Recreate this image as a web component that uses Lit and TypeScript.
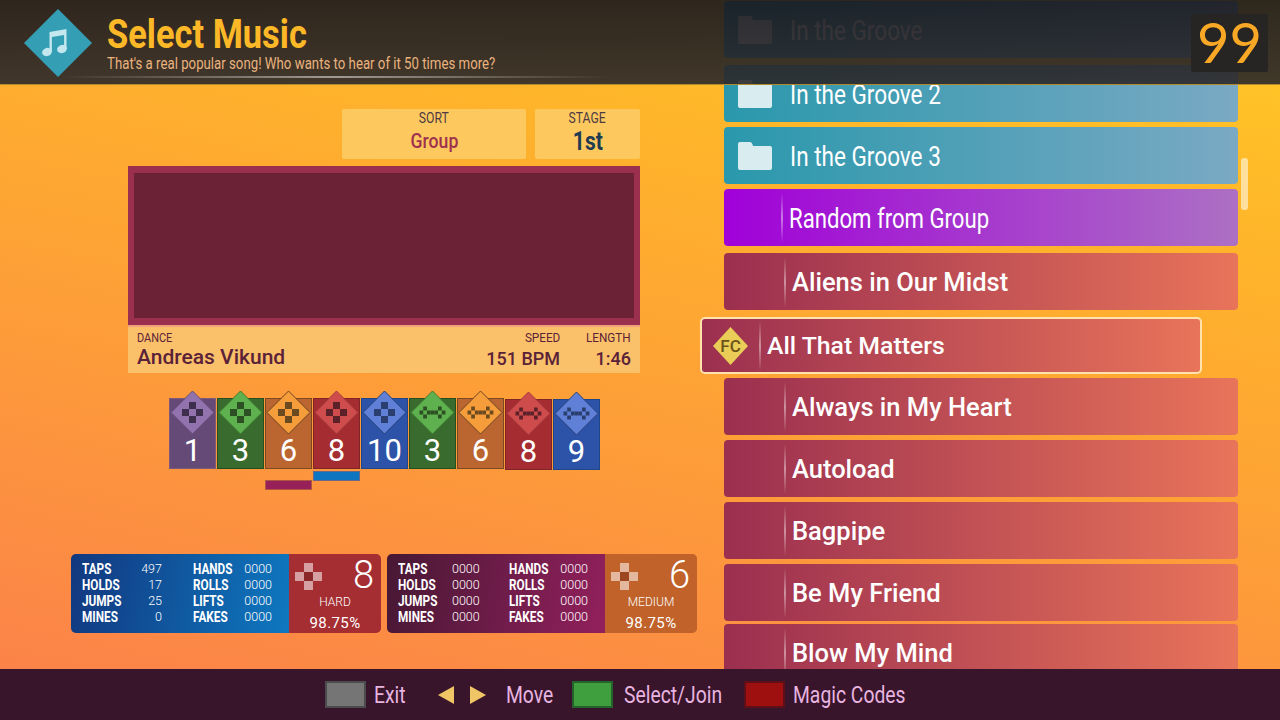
import { LitElement, html, css, svg } from 'lit';
import { customElement } from 'lit/decorators.js';

type Tile = { n: number; c: string; dbl?: boolean; low?: boolean; mark?: string };

const TILES: Tile[] = [
  { n: 1, c: 'beginner' },
  { n: 3, c: 'easy' },
  { n: 6, c: 'medium', mark: 'p2' },
  { n: 8, c: 'hard', mark: 'p1' },
  { n: 10, c: 'expert' },
  { n: 3, c: 'easy', dbl: true },
  { n: 6, c: 'medium', dbl: true },
  { n: 8, c: 'hard', dbl: true, low: true },
  { n: 9, c: 'expert', dbl: true, low: true },
];

type Row = { title: string; kind: 'folder' | 'random' | 'song' | 'selected'; mt: number };

const ROWS: Row[] = [
  { title: 'In the Groove', kind: 'folder', mt: 1 },
  { title: 'In the Groove 2', kind: 'folder', mt: 7 },
  { title: 'In the Groove 3', kind: 'folder', mt: 5 },
  { title: 'Random from Group', kind: 'random', mt: 5 },
  { title: 'Aliens in Our Midst', kind: 'song', mt: 7 },
  { title: 'All That Matters', kind: 'selected', mt: 7 },
  { title: 'Always in My Heart', kind: 'song', mt: 4 },
  { title: 'Autoload', kind: 'song', mt: 5 },
  { title: 'Bagpipe', kind: 'song', mt: 5 },
  { title: 'Be My Friend', kind: 'song', mt: 5 },
  { title: 'Blow My Mind', kind: 'song', mt: 3 },
];

const singlePad = svg`
  <rect x="7" y="0" width="7" height="7" /><rect x="0" y="7" width="7" height="7" />
  <rect x="14" y="7" width="7" height="7" /><rect x="7" y="14" width="7" height="7" />`;

const doubleCells = [[1, 0], [5, 0], [0, 1], [2, 1], [3, 1], [4, 1], [6, 1], [1, 2], [5, 2]];

@customElement('app-root')
export class AppRoot extends LitElement {
  static styles = css`
    :host {
      display: block;
      width: 1280px;
      height: 720px;
      overflow: hidden;
      font-family: Roboto, sans-serif;
    }
    .page {
      position: relative;
      width: 1280px;
      height: 720px;
      display: flex;
      flex-direction: column;
      overflow: hidden;
      background: linear-gradient(192deg, #ffca25 0%, #ffb52a 25%, #fb7f4b 100%);
    }
    .cond {
      display: inline-block;
      transform: scaleX(0.84);
      transform-origin: left center;
      white-space: nowrap;
    }
    .cond.mid { transform-origin: center center; }
    .cond.end { transform-origin: right center; transform: scaleX(0.9); }

    /* header lies over the top of the wheel */
    .header {
      position: absolute;
      top: 0;
      left: 0;
      right: 0;
      height: 84px;
      border-bottom: 1px solid #b08a2c;
      background: linear-gradient(rgba(24, 22, 28, 0.9), rgba(44, 41, 42, 0.9));
      display: flex;
      z-index: 2;
    }
    .logo { width: 68px; height: 68px; margin: 9px 0 0 24px; }
    .titles { margin-left: 15px; }
    .title {
      font-size: 41px;
      font-weight: 700;
      color: #fdb827;
      line-height: 44px;
      margin-top: 12px;
    }
    .sub {
      font-size: 15.75px;
      color: #eab27e;
      line-height: 18px;
      margin-top: -1px;
    }
    .rule {
      position: absolute;
      left: 60px;
      top: 76px;
      width: 550px;
      height: 2px;
      background: linear-gradient(90deg, transparent, rgba(255, 255, 255, 0.5) 50%, transparent);
    }
    .timer {
      position: absolute;
      right: 12px;
      top: 14px;
      width: 77px;
      height: 58px;
      background: #262523;
      border-radius: 2px;
      color: #f9a825;
      font-family: Lato, sans-serif;
      font-weight: 400;
      font-size: 56px;
      line-height: 56px;
      text-align: center;
    }

    .main { flex: 1; display: flex; min-height: 0; overflow: hidden; }

    /* left column */
    .left { width: 724px; flex: none; padding-top: 109px; }
    .boxes { display: flex; justify-content: flex-end; gap: 9px; margin-left: 128px; width: 512px; }
    .box {
      height: 50px;
      border-radius: 2px;
      background: #fdc95e;
      text-align: center;
      color: #4f3a44;
      font-size: 14.5px;
    }
    .box.sort { width: 184px; }
    .box.stage { width: 105px; }
    .box .lbl { line-height: 14px; margin-top: 3px; }
    .box .val { line-height: 26px; font-size: 21px; color: #a0304f; font-weight: 500; margin-top: 2px; }
    .box.stage .val { color: #1f3b52; font-size: 25px; font-weight: 700; margin-top: 3px; }
    .banner {
      box-sizing: border-box;
      margin: 7px 0 0 128px;
      width: 512px;
      height: 159px;
      border: solid #9b2f4e;
      border-width: 7px 6px;
      background: #6b2236;
    }
    .info {
      box-sizing: border-box;
      margin-left: 128px;
      width: 512px;
      height: 48px;
      border-top: 2px solid #f1a27a;
      background: #fbc06a;
      color: #5a2238;
      display: flex;
      padding: 3px 9px 0 9px;
    }
    .info .lbl { font-size: 13px; line-height: 15px; }
    .info .artist { flex: 1; }
    .info .name { font-size: 21px; font-weight: 500; line-height: 25px; }
    .info .col { text-align: right; margin-left: 21px; }
    .info .col.len { width: 50px; }
    .info .v { font-size: 18px; font-weight: 500; line-height: 28px; }

    .tiles { display: flex; gap: 1px; margin: 17px 0 0 169px; height: 100px; }
    .tile-col { width: 47px; }
    .tile-col.low { padding-top: 1px; }
    .tile {
      position: relative;
      box-sizing: border-box;
      margin-top: 8px;
      height: 71px;
      border: 1px solid var(--edge);
      background: var(--body);
      color: #fff;
      font-size: 31px;
      line-height: 34px;
      text-align: center;
      padding-top: 35px;
    }
    .tile svg.dia { position: absolute; left: -1px; top: -10px; width: 47px; height: 47px; overflow: visible; }
    .beginner { --body: #654a78; --edge: #7e5a78; --top: #9273ae; --line: #654a78; --pad: #3f2f4e; }
    .easy { --body: #396b2e; --edge: #254f1f; --top: #5fb04e; --line: #3b7a2e; --pad: #2c5024; }
    .medium { --body: #bb6530; --edge: #7c4a20; --top: #f59c3b; --line: #6c4420; --pad: #6c4a20; }
    .hard { --body: #a52c30; --edge: #7e2626; --top: #cf4c4d; --line: #a0383a; --pad: #5c2028; }
    .expert { --body: #2c53a8; --edge: #20468a; --top: #5f80d6; --line: #24407a; --pad: #2a3f70; }
    .mark { height: 8px; margin: 3px 1px 0; }
    .mark.p1 { background: #0e75c0; outline: 1px solid rgba(44, 83, 168, 0.7); }
    .mark.p2 { background: #972058; margin-top: 12px; outline: 1px solid rgba(120, 50, 70, 0.6); }

    .stats { display: flex; gap: 6px; margin: 64px 0 0 71px; }
    .panel {
      width: 310px;
      height: 79px;
      border-radius: 5px;
      display: flex;
      overflow: hidden;
      color: #fff;
      box-shadow: 0 0 0 1px rgba(80, 50, 60, 0.25) inset;
    }
    .panel.p1 .grid { background: linear-gradient(100deg, #12387f, #0e78c0); }
    .panel.p2 .grid { background: linear-gradient(100deg, #471834, #92205c); }
    .grid {
      width: 218px;
      box-sizing: border-box;
      padding: 7px 0 0 11px;
      display: grid;
      grid-template-columns: 54px 26px 81px 29px;
      grid-auto-rows: 16px;
      font-size: 12px;
      line-height: 16px;
    }
    .grid b { font-weight: 700; font-size: 14px; }
    .grid b.second { padding-left: 31px; }
    .grid span.num { text-align: right; font-weight: 300; font-size: 12.5px; }
    .meter { width: 92px; position: relative; text-align: center; }
    .meter.hard { background: #a52e33; }
    .meter.medium { background: #c0622a; }
    .meter svg { position: absolute; left: 6px; top: 9px; width: 27px; height: 27px; }
    .meter .big {
      position: absolute;
      right: 7px;
      top: 0;
      font-size: 38px;
      font-weight: 300;
      line-height: 42px;
    }
    .meter .diff { padding-top: 41px; font-size: 12px; line-height: 15px; font-weight: 300; }
    .meter .pct { font-size: 15px; line-height: 22px; margin-top: 2px; letter-spacing: 0.4px; }

    /* wheel */
    .wheel { width: 514px; flex: none; }
    .row {
      box-sizing: border-box;
      height: 57px;
      border-radius: 4px;
      display: flex;
      align-items: center;
      color: #fff;
      font-size: 27px;
      white-space: nowrap;
    }
    .row.folder { background: linear-gradient(90deg, #2a98ac, #7aa9c3); }
    .row.random { background: linear-gradient(90deg, #a000d8, #ac70c4); }
    .row.song, .row.selected { background: linear-gradient(90deg, #9b2f4f, #e8745a); font-weight: 500; font-size: 25.5px; }
    .row.selected {
      width: 502px;
      margin-left: -24px;
      border: 2px solid #ffe2ac;
      border-radius: 5px;
      font-size: 24.8px;
    }
    .folder-icon { width: 34px; height: 28px; margin: 0 18px 0 14px; flex: none; }
    .row.folder .cond { transform: scaleX(0.835); margin-top: 2px; }
    .row.random .cond { transform: scaleX(0.82); margin: 3px 0 0 -1px; }
    .sep {
      width: 2px;
      height: 50px;
      flex: none;
      background: linear-gradient(transparent, rgba(255, 255, 255, 0.45) 50%, transparent);
    }
    .row.song .sep { margin: 0 6px 0 60px; }
    .row.random .sep { margin: 0 7px 0 57px; }
    .row.selected .sep { margin: 0 6px 0 11px; }
    .fc { width: 35px; height: 40px; margin-left: 11px; flex: none; }
    .scroll {
      position: absolute;
      left: 1241px;
      top: 158px;
      width: 7px;
      height: 52px;
      border-radius: 3px;
      background: rgba(255, 255, 255, 0.55);
    }

    /* footer */
    .footer {
      height: 51px;
      flex: none;
      position: relative;
      z-index: 1;
      background: #38152a;
      display: flex;
      align-items: center;
      padding-left: 325px;
      color: #e8b4e0;
      font-size: 23px;
    }
    .key { box-sizing: border-box; width: 41px; height: 27px; border: 2px solid; flex: none; }
    .key.grey { background: #757575; border-color: #4c4c4c; }
    .key.green { background: #3f9f3e; border-color: #23642a; margin-left: 8px; }
    .key.red { background: #9e0f10; border-color: #5e0f18; margin-left: 10px; }
    .label { margin-left: 8px; display: inline-block; padding-top: 2px; }
    .arrows { width: 48px; height: 18px; margin-left: 32px; flex: none; }
    .lab-exit { width: 32px; }
    .lab-move { width: 58px; margin-left: 20px; }
    .lab-select { width: 110px; margin-left: 11px; }
    .lab-magic { width: 120px; }
  `;

  private renderTile(t: Tile) {
    const pad = t.dbl
      ? svg`<g transform="translate(10.5 17.5) scale(3.7 4)">
          ${doubleCells.map(([x, y]) => svg`<rect x=${x} y=${y} width="1" height="1" />`)}
        </g>`
      : svg`<g transform="translate(13 13)">${singlePad}</g>`;
    return html`
      <div class="tile-col ${t.low ? 'low' : ''}">
        <div class="tile ${t.c}">
          <svg class="dia" viewBox="0 0 47 47">
            <polygon points="23.5,2 45,23.5 23.5,45 2,23.5" fill="var(--top)" stroke="var(--line)" />
            <g fill="var(--pad)">${pad}</g>
          </svg>
          ${t.n}
        </div>
        ${t.mark ? html`<div class="mark ${t.mark}"></div>` : ''}
      </div>
    `;
  }

  private renderPanel(player: string, diff: string, level: number, name: string, nums: string[]) {
    const labels = ['TAPS', 'HANDS', 'HOLDS', 'ROLLS', 'JUMPS', 'LIFTS', 'MINES', 'FAKES'];
    return html`
      <div class="panel ${player}">
        <div class="grid">
          ${labels.map(
            (l, i) => html`
              <b class=${i % 2 ? 'second' : ''}><span class="cond">${l}</span></b>
              <span class="num">${nums[i]}</span>
            `
          )}
        </div>
        <div class="meter ${diff}">
          <svg viewBox="0 0 27 27" fill="rgba(255,255,255,0.55)">
            <rect x="9" y="0" width="9" height="9" /><rect x="0" y="9" width="9" height="9" />
            <rect x="18" y="9" width="9" height="9" /><rect x="9" y="18" width="9" height="9" />
            <rect x="9" y="9" width="9" height="9" fill="rgba(90,20,20,0.35)" />
          </svg>
          <div class="big">${level}</div>
          <div class="diff">${name}</div>
          <div class="pct">98.75%</div>
        </div>
      </div>
    `;
  }

  private renderRow(r: Row) {
    return html`
      <div class="row ${r.kind}" style="margin-top:${r.mt}px">
        ${r.kind === 'folder'
          ? html`<svg class="folder-icon" viewBox="0 0 34 28">
              <path
                d="M2 0h10q2 0 3 4h17q2 0 2 2v20q0 2-2 2H2q-2 0-2-2V2q0-2 2-2z"
                fill="rgba(255,255,255,0.82)"
              />
            </svg>`
          : ''}
        ${r.kind === 'selected'
          ? html`<svg class="fc" viewBox="0 0 35 40">
                <polygon points="17.5,1 35,20 17.5,39 0,20" fill="#e9cd57" />
                <text x="17.5" y="26" text-anchor="middle" font-size="17" fill="#6b5418" font-family="Roboto">FC</text>
              </svg>`
          : ''}
        ${r.kind !== 'folder' ? html`<div class="sep"></div>` : ''}
        ${r.kind === 'folder' || r.kind === 'random' ? html`<span class="cond">${r.title}</span>` : r.title}
      </div>
    `;
  }

  render() {
    return html`
      <div class="page">
        <div class="main">
          <div class="left">
            <div class="boxes">
              <div class="box sort">
                <div class="lbl"><span class="cond mid">SORT</span></div>
                <div class="val"><span class="cond mid">Group</span></div>
              </div>
              <div class="box stage">
                <div class="lbl"><span class="cond mid">STAGE</span></div>
                <div class="val"><span class="cond mid">1st</span></div>
              </div>
            </div>
            <div class="banner"></div>
            <div class="info">
              <div class="artist">
                <div class="lbl"><span class="cond">DANCE</span></div>
                <div class="name">Andreas Vikund</div>
              </div>
              <div class="col">
                <div class="lbl"><span class="cond end">SPEED</span></div>
                <div class="v">151 BPM</div>
              </div>
              <div class="col len">
                <div class="lbl"><span class="cond end">LENGTH</span></div>
                <div class="v">1:46</div>
              </div>
            </div>
            <div class="tiles">${TILES.map((t) => this.renderTile(t))}</div>
            <div class="stats">
              ${this.renderPanel('p1', 'hard', 8, 'HARD', ['497', '0000', '17', '0000', '25', '0000', '0', '0000'])}
              ${this.renderPanel('p2', 'medium', 6, 'MEDIUM', Array(8).fill('0000'))}
            </div>
          </div>
          <div class="wheel">${ROWS.map((r) => this.renderRow(r))}</div>
        </div>

        <div class="scroll"></div>

        <div class="header">
          <svg class="logo" viewBox="0 0 68 68">
            <polygon points="34,0 68,34 34,68 0,34" fill="#349fb4" />
            <g fill="#c3e6ef">
              <ellipse cx="23" cy="43" rx="5" ry="4" transform="rotate(-20 23 43)" />
              <ellipse cx="38" cy="40" rx="5" ry="4" transform="rotate(-20 38 40)" />
              <path d="M25.5 43V23l17-3v20h-2.4V26l-12.2 2v15z" />
            </g>
          </svg>
          <div class="titles">
            <div class="title"><span class="cond">Select Music</span></div>
            <div class="sub"><span class="cond">That's a real popular song! Who wants to hear of it 50 times more?</span></div>
          </div>
          <div class="rule"></div>
          <div class="timer">99</div>
        </div>

        <div class="footer">
          <div class="key grey"></div>
          <span class="label lab-exit"><span class="cond">Exit</span></span>
          <svg class="arrows" viewBox="0 0 48 18">
            <polygon points="16,0 16,18 0,9" fill="#f0c566" />
            <polygon points="32,0 32,18 48,9" fill="#f0c566" />
          </svg>
          <span class="label lab-move"><span class="cond">Move</span></span>
          <div class="key green"></div>
          <span class="label lab-select"><span class="cond">Select/Join</span></span>
          <div class="key red"></div>
          <span class="label lab-magic"><span class="cond">Magic Codes</span></span>
        </div>
      </div>
    `;
  }
}
